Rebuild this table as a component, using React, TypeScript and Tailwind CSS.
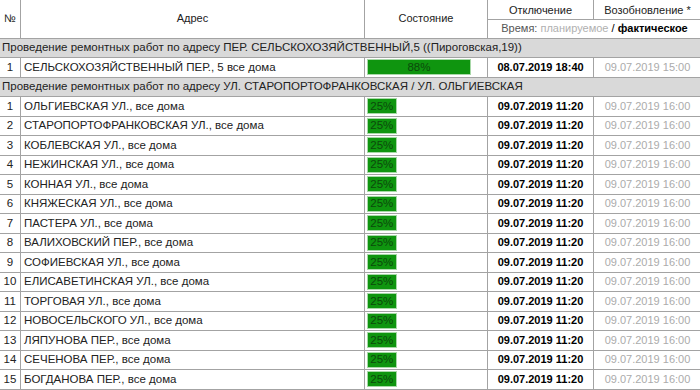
import React from "react";

const rows = [
  "ОЛЬГИЕВСКАЯ УЛ., все дома",
  "СТАРОПОРТОФРАНКОВСКАЯ УЛ., все дома",
  "КОБЛЕВСКАЯ УЛ., все дома",
  "НЕЖИНСКАЯ УЛ., все дома",
  "КОННАЯ УЛ., все дома",
  "КНЯЖЕСКАЯ УЛ., все дома",
  "ПАСТЕРА УЛ., все дома",
  "ВАЛИХОВСКИЙ ПЕР., все дома",
  "СОФИЕВСКАЯ УЛ., все дома",
  "ЕЛИСАВЕТИНСКАЯ УЛ., все дома",
  "ТОРГОВАЯ УЛ., все дома",
  "НОВОСЕЛЬСКОГО УЛ., все дома",
  "ЛЯПУНОВА ПЕР., все дома",
  "СЕЧЕНОВА ПЕР., все дома",
  "БОГДАНОВА ПЕР., все дома",
];

function Bar({ pct }: { pct: number }) {
  return (
    <div className="w-[118px] h-[16px]">
      <div
        className="h-full bg-[#0f950f] border border-[#a8d8a8] flex items-center justify-center text-[#0b4a0b] overflow-visible whitespace-nowrap"
        style={{ width: `${pct}%` }}
      >
        {pct}%
      </div>
    </div>
  );
}

function Row({ n, addr, pct, off, on }: { n: number; addr: string; pct: number; off: string; on: string }) {
  return (
    <tr className="h-[19.5px]">
      <td className="border border-[#a3a3a3] text-center px-0">{n}</td>
      <td className="border border-[#a3a3a3] pl-[3px]">{addr}</td>
      <td className="border border-[#a3a3a3] pl-[2px] py-0">
        <Bar pct={pct} />
      </td>
      <td className="border border-[#a3a3a3] text-center font-bold text-black text-[11px]">{off}</td>
      <td className="border border-[#a3a3a3] text-center text-[#ababab] text-[11px]">{on}</td>
    </tr>
  );
}

function Group({ text }: { text: string }) {
  return (
    <tr className="h-[19.5px] bg-[#d9d9d9]">
      <td colSpan={5} className="border border-[#a3a3a3] pl-[2px] whitespace-nowrap">
        {text}
      </td>
    </tr>
  );
}

export default function App() {
  return (
    <div className="w-[700px] h-[390px] overflow-hidden bg-white" style={{ fontFamily: '"Liberation Sans", Arial, sans-serif' }}>
      <table className="border-collapse text-[11.5px] text-[#222] w-[702px] -ml-px table-fixed leading-none">
        <colgroup>
          <col className="w-[21px]" />
          <col className="w-[344px]" />
          <col className="w-[123px]" />
          <col className="w-[106px]" />
          <col className="w-[108px]" />
        </colgroup>
        <thead className="text-[11px]">
          <tr className="h-[19px]">
            <th rowSpan={2} className="border border-[#a3a3a3] border-t-0 font-normal text-center">№</th>
            <th rowSpan={2} className="border border-[#a3a3a3] border-t-0 font-normal text-center">Адрес</th>
            <th rowSpan={2} className="border border-[#a3a3a3] border-t-0 font-normal text-center">Состояние</th>
            <th className="border border-[#a3a3a3] border-t-0 font-normal text-center pt-[2px]">Отключение</th>
            <th className="border border-[#a3a3a3] border-t-0 font-normal text-center pt-[2px]">Возобновление *</th>
          </tr>
          <tr className="h-[19px]">
            <th colSpan={2} className="border border-[#a3a3a3] font-normal text-center whitespace-nowrap">
              <span className="text-[#555]">Время: </span>
              <span className="text-[#b0b0b0]">планируемое</span>
              <span className="text-black"> / </span>
              <span className="font-bold text-black">фактическое</span>
            </th>
          </tr>
        </thead>
        <tbody>
          <Group text="Проведение ремонтных работ по адресу ПЕР. СЕЛЬСКОХОЗЯЙСТВЕННЫЙ,5 ((Пироговская,19))" />
          <Row n={1} addr="СЕЛЬСКОХОЗЯЙСТВЕННЫЙ ПЕР., 5 все дома" pct={88} off="08.07.2019 18:40" on="09.07.2019 15:00" />
          <Group text="Проведение ремонтных работ по адресу УЛ. СТАРОПОРТОФРАНКОВСКАЯ / УЛ. ОЛЬГИЕВСКАЯ" />
          {rows.map((r, i) => (
            <Row key={i} n={i + 1} addr={r} pct={25} off="09.07.2019 11:20" on="09.07.2019 16:00" />
          ))}
        </tbody>
      </table>
    </div>
  );
}
